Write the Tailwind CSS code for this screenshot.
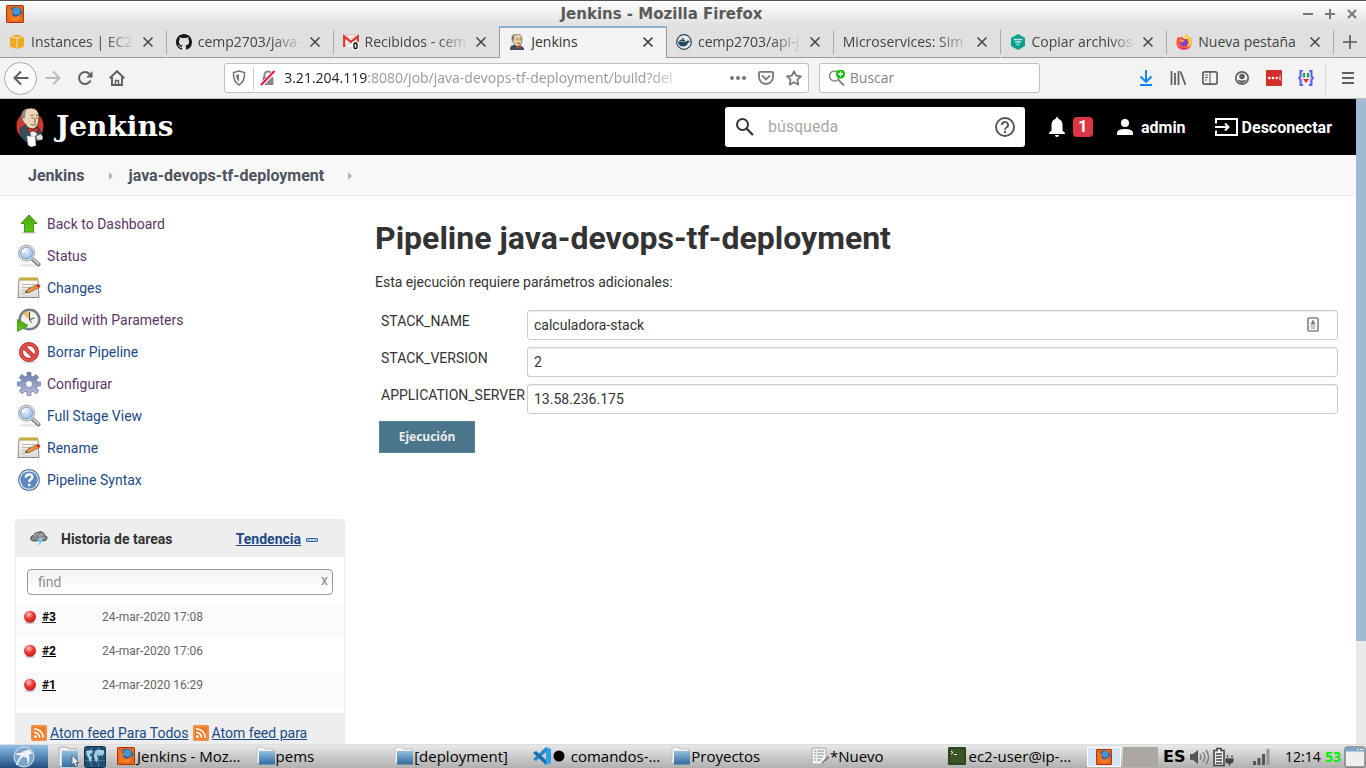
<!DOCTYPE html>
<html lang="es">
<head>
<meta charset="utf-8">
<title>Jenkins</title>
<script src="https://cdn.jsdelivr.net/npm/@tailwindcss/browser@4"></script>
</head>
<body class="flex h-screen flex-col overflow-hidden bg-white font-['Roboto','Liberation_Sans',sans-serif] text-sm text-[#333]">
<svg class="absolute size-0" aria-hidden="true">
  <defs>
    <linearGradient id="green" x1="0" y1="0" x2="0" y2="1"><stop offset="0" stop-color="#4aa80c"/><stop offset="1" stop-color="#5cc813"/></linearGradient>
    <linearGradient id="paper" x1="0" y1="0" x2="0" y2="1"><stop offset="0" stop-color="#fff"/><stop offset="1" stop-color="#d9d9d6"/></linearGradient>
    <linearGradient id="gear" x1="0" y1="0" x2="0" y2="1"><stop offset="0" stop-color="#6d7eaa"/><stop offset="1" stop-color="#b7bedb"/></linearGradient>
    <linearGradient id="folder" x1="0" y1="0" x2="0" y2="1"><stop offset="0" stop-color="#93bede"/><stop offset="1" stop-color="#2e6ca0"/></linearGradient>
    <radialGradient id="ball" cx=".4" cy=".3" r=".7"><stop offset="0" stop-color="#ffc9c4"/><stop offset=".5" stop-color="#ef3b36"/><stop offset="1" stop-color="#c91818"/></radialGradient>
    <radialGradient id="glass" cx=".4" cy=".3" r=".8"><stop offset="0" stop-color="#eef5fd"/><stop offset="1" stop-color="#8fb8e6"/></radialGradient>
  </defs>
  <symbol id="x" viewBox="0 0 12 12"><path d="M1.500 1.500l9 9M10.500 1.500l-9 9" stroke="currentColor" stroke-width="1.500" fill="none"/></symbol>
  <symbol id="firefox-old" viewBox="0 0 18 18">
    <rect width="18" height="18" rx="1.500" fill="#b13208"/><rect x="1" y="1" width="16" height="16" fill="#e9691c"/>
    <circle cx="9.500" cy="8.500" r="6.800" fill="#2b5d9e"/><circle cx="10.500" cy="6" r="3.800" fill="#4796cf"/>
    <path d="M2 3l1.500 1.700Q5 3.800 6.500 4.200L5.300 6 7.500 7.300 6 8.500Q6.500 12 10 11.500q3.500-.5 5.500-4Q16.500 14 11 15.500 4 16.500 2 11z" fill="#ee7420"/>
    <path d="M4.500 13q5 3 10-.8-4.500 5-10 .8z" fill="#f7b42c"/>
  </symbol>
  <symbol id="glass-icon" viewBox="0 0 24 24">
    <ellipse cx="11" cy="21.500" rx="9" ry="1.500" fill="#000" opacity=".1"/>
    <path d="M15 14.500l6.500 6" stroke="#777" stroke-width="4" stroke-linecap="round"/><path d="M15.500 14.500l6 5.500" stroke="#ccc" stroke-width="2" stroke-linecap="round"/>
    <circle cx="9.500" cy="9" r="8" fill="#e9e9e7" stroke="#a2a29e"/><circle cx="9.500" cy="9" r="6" fill="url(#glass)" stroke="#6d98cb"/>
    <path d="M5.500 9q0-3.500 4-4" stroke="#fff" stroke-width="1.500" fill="none"/>
  </symbol>
  <symbol id="notepad" viewBox="0 0 24 24">
    <path d="M2 3h19l1 18.500H1z" fill="url(#paper)" stroke="#8a8a86"/><path d="M2.500 1.500h18v3h-18z" fill="#b49a2b"/>
    <path d="M4 1v4M7 1v4M10 1v4M13 1v4M16 1v4M19 1v4" stroke="#e9d58a" stroke-width=".9"/>
    <path d="M5 8.500h13M5 11.500h11M5 14.500h7M5 17.500h3" stroke="#b8b8b6"/>
    <path d="M8.500 16.500l2.500-3.500L20.500 8.500l1.800 3L12 16.500z" fill="#e59b3c" stroke="#8a5515" stroke-width=".8"/><path d="M19 9.200l2-1q2.500.300 2.500 2l-2.300 1.600z" fill="#cf2d22"/><path d="M8 17l1.500-2 1 1.300z" fill="#222"/>
  </symbol>
  <symbol id="feed" viewBox="0 0 16 16"><rect width="16" height="16" rx="2" fill="#ec7a27"/><rect x="1" y="1" width="14" height="14" rx="1.500" fill="none" stroke="#f6a45f"/><circle cx="4.500" cy="11.700" r="1.400" fill="#fff"/><path d="M3.200 7.400a5.400 5.400 0 0 1 5.400 5.400M3.200 3.800a9 9 0 0 1 9 9" stroke="#fff" stroke-width="1.700" fill="none"/></symbol>
  <symbol id="red-ball" viewBox="0 0 14 14"><ellipse cx="7" cy="12.700" rx="5" ry="1.200" fill="#000" opacity=".2"/><circle cx="7" cy="6.800" r="6" fill="url(#ball)"/></symbol>
  <symbol id="folder-icon" viewBox="0 0 20 20"><path d="M1 2.500Q1 1 2.500 1h5L9 3h8.500v14H1z" fill="#f3f3f1" stroke="#b8b8b4" stroke-width=".7"/><path d="M3 5h16v13.500H3z" fill="url(#folder)"/></symbol>
  <symbol id="butler" viewBox="0 0 28 40">
    <ellipse cx="14" cy="19" rx="13.500" ry="14.500" fill="#d33833"/>
    <path d="M4 21l6-3 12 2 4 7-1 6-3 1-12 1-5-5z" fill="#335061" stroke="#1d2f3a" stroke-width=".6"/>
    <path d="M6 11Q6 1.500 15 1q8 .5 8 9l-.5 5q-1 6-6 7-5 0-7-5-3-1-3.500-6z" fill="#efd5b6" stroke="#3a2d24" stroke-width=".8"/>
    <path d="M5.500 12Q4 3 12 1 9 4 9.500 8l-1 4q-2-2-1.500 2z" fill="#8c8c8c"/>
    <path d="M14.500 8.500l3-.5M19.500 8l2.500.5M15.500 11h2M20 11h1.500M18.500 11l1 4-2 .5M15 17.500q3 1.500 5.500-.5" fill="none" stroke="#59432f" stroke-width=".8"/>
    <path d="M14 24l4-1 3 4-3 4-3-2z" fill="#f0f0f0"/><path d="M12 20.500l5 2 5-2v5l-5-1.500-5 1.500z" fill="#d33833" stroke="#4a1210" stroke-width=".6"/>
    <path d="M11 29l8 .5 1 9-5 1.500-3-2z" fill="#fff" stroke="#999" stroke-width=".4"/><path d="M20 29l5-2 2 3-1 3-5 0z" fill="#e3e3e3" stroke="#555" stroke-width=".5"/>
  </symbol>
  <symbol id="chev" viewBox="0 0 6 8"><path d="M1 0l4 4-4 4z" fill="#b3b3b3"/></symbol>
</svg>

<header class="flex h-[26px] shrink-0 items-center border-t border-[#555] bg-linear-to-b from-white to-[#e0e0e0] pl-[6px] pr-[9px]">
  <svg class="size-[18px]"><use href="#firefox-old"/></svg>
  <h2 class="flex-1 pr-1 text-center font-['DejaVu_Sans',sans-serif] text-[15px] leading-5 font-bold text-[#5a5a5a]">Jenkins - Mozilla Firefox</h2>
  <div class="flex items-center gap-3 text-[#777]">
    <button aria-label="Minimizar"><svg class="size-[10px]" viewBox="0 0 10 10"><path d="M0 5h10" stroke="currentColor" stroke-width="2"/></svg></button>
    <button aria-label="Maximizar"><svg class="size-[10px]" viewBox="0 0 10 10"><path d="M0 5h10M5 0v10" stroke="currentColor" stroke-width="2"/></svg></button>
    <button aria-label="Cerrar"><svg class="size-[10px]" viewBox="0 0 10 10"><path d="M1 1l8 8M9 1l-8 8" stroke="currentColor" stroke-width="2"/></svg></button>
  </div>
</header>

<nav aria-label="Pestañas" class="flex h-8 shrink-0 bg-[#e0e0e0] font-['Open_Sans','Noto_Sans',sans-serif] text-sm text-[#444]">
  <div class="flex min-w-0 flex-1 items-center gap-[6px] border-b border-[#999] pl-[9px] pr-3">
    <svg class="size-4 shrink-0" viewBox="0 0 16 16"><path d="M1 3l6.500 1.500V15L1 12.500zM8.500 4.500L15 3v9.500L8.500 15zM2 2l6-1.500L14 2 8 3.500z" fill="#f0a91f"/></svg>
    <span class="flex-1 overflow-hidden whitespace-nowrap [mask-image:linear-gradient(to_right,black_70%,transparent)]">Instances | EC2</span>
    <button aria-label="Cerrar pestaña"><svg class="size-3"><use href="#x"/></svg></button>
  </div>
  <span class="my-1 w-px bg-[#aaa]"></span>
  <div class="flex min-w-0 flex-1 items-center gap-[6px] border-b border-[#999] pl-[9px] pr-3">
    <svg class="size-4 shrink-0" viewBox="0 0 16 16"><path fill="#191717" d="M8 0C3.580 0 0 3.580 0 8c0 3.540 2.290 6.530 5.470 7.590.4.070.55-.17.55-.38v-1.490c-2.010.37-2.530-.49-2.690-.94-.09-.23-.48-.94-.82-1.130-.28-.15-.68-.52-.01-.53.63-.01 1.080.58 1.230.82.72 1.210 1.870.87 2.330.66.070-.52.28-.87.51-1.070-1.780-.2-3.640-.89-3.640-3.950 0-.87.31-1.590.82-2.150-.08-.2-.36-1.020.08-2.120 0 0 .67-.21 2.200.82a7.500 7.500 0 0 1 4 0c1.530-1.040 2.200-.82 2.200-.82.44 1.100.16 1.920.08 2.120.51.560.82 1.270.82 2.150 0 3.070-1.870 3.750-3.650 3.950.29.250.54.730.54 1.480v2.200c0 .21.150.46.550.38A8 8 0 0 0 16 8c0-4.420-3.580-8-8-8z"/></svg>
    <span class="flex-1 overflow-hidden whitespace-nowrap [mask-image:linear-gradient(to_right,black_70%,transparent)]">cemp2703/java-</span>
    <button aria-label="Cerrar pestaña"><svg class="size-3"><use href="#x"/></svg></button>
  </div>
  <span class="my-1 w-px bg-[#aaa]"></span>
  <div class="flex min-w-0 flex-1 items-center gap-[6px] border-b border-[#999] pl-[9px] pr-3">
    <svg class="size-4 shrink-0" viewBox="0 0 16 16"><path d="M0 1h16v12H0z" fill="#fff"/><path d="M1.200 13V2.500L8 8l6.800-5.500V8" fill="none" stroke="#dd3b34" stroke-width="2.300"/><path d="M3 12l4-4M13 1H3l5 4z" stroke="#e8a29e" fill="none" stroke-width=".7"/><rect x="9" y="7.500" width="7" height="8.500" rx="2" fill="#fff"/><rect x="11" y="9" width="3" height="5.500" rx="1.300" fill="none" stroke="#000" stroke-width="1.300"/></svg>
    <span class="flex-1 overflow-hidden whitespace-nowrap [mask-image:linear-gradient(to_right,black_70%,transparent)]">Recibidos - cem</span>
    <button aria-label="Cerrar pestaña"><svg class="size-3"><use href="#x"/></svg></button>
  </div>
  <div class="flex min-w-0 flex-1 items-center gap-[6px] border-x border-t-2 border-x-[#999] border-t-[#8fb1d0] bg-[#f3f3f3] pl-[9px] pr-3 pb-[2px] text-[#333]">
    <svg class="size-4 shrink-0" viewBox="0 0 16 16"><path d="M1 14q1-3 4-3h6l4 3v2H1z" fill="#335061"/><path d="M3 5q0-5 5-5 5 .3 5 5l-.5 4q-1 3.500-4 3.500Q5.500 12 4.500 9 3 8 3 5z" fill="#e8c9a3" stroke="#5a4a3c" stroke-width=".6"/><path d="M3 6Q1.500 1 6 .5 4.800 2 5 4L4.500 7z" fill="#777"/><path d="M7.500 5h1.500M10.500 5h1.500M8 9q2 1 3 0" stroke="#4a3a2c" fill="none" stroke-width=".8"/><path d="M7 12l2.500 1.500L12 12v3l-2.500-1L7 15z" fill="#d33833"/></svg>
    <span class="flex-1 overflow-hidden whitespace-nowrap">Jenkins</span>
    <button aria-label="Cerrar pestaña"><svg class="size-3"><use href="#x"/></svg></button>
  </div>
  <div class="flex min-w-0 flex-1 items-center gap-[6px] border-b border-[#999] pl-[9px] pr-3">
    <svg class="size-4 shrink-0" viewBox="0 0 16 16"><circle cx="8" cy="8" r="7.300" fill="#e8eef1" stroke="#27485f" stroke-width="1.200"/><path d="M2 7.500h8q2 0 1.800-2 1 .7.900 1.600l1.500.1q-.6 1.300-2 1.400Q11 12.500 7 12.500 2.500 12.500 2 7.500z" fill="#27485f"/><path d="M3.500 5.700h5.500v1.300H3.500zM6 4h1.600v1.400H6z" fill="#27485f"/></svg>
    <span class="flex-1 overflow-hidden whitespace-nowrap [mask-image:linear-gradient(to_right,black_70%,transparent)]">cemp2703/api-j</span>
    <button aria-label="Cerrar pestaña"><svg class="size-3"><use href="#x"/></svg></button>
  </div>
  <span class="my-1 w-px bg-[#aaa]"></span>
  <div class="flex min-w-0 flex-1 items-center gap-[6px] border-b border-[#999] pl-[9px] pr-3">
    <span class="flex-1 overflow-hidden whitespace-nowrap [mask-image:linear-gradient(to_right,black_75%,transparent)]">Microservices: Sim</span>
    <button aria-label="Cerrar pestaña"><svg class="size-3"><use href="#x"/></svg></button>
  </div>
  <span class="my-1 w-px bg-[#aaa]"></span>
  <div class="flex min-w-0 flex-1 items-center gap-[6px] border-b border-[#999] pl-[9px] pr-3">
    <svg class="size-4 shrink-0" viewBox="0 0 16 16"><path d="M8 0l7 4v8l-7 4-7-4V4z" fill="#0aa18f"/><path d="M3.500 5.500h9M5 8h6M6.500 10.500h3" stroke="#b6e5df" stroke-width="1.300"/></svg>
    <span class="flex-1 overflow-hidden whitespace-nowrap [mask-image:linear-gradient(to_right,black_75%,transparent)]">Copiar archivos</span>
    <button aria-label="Cerrar pestaña"><svg class="size-3"><use href="#x"/></svg></button>
  </div>
  <span class="my-1 w-px bg-[#aaa]"></span>
  <div class="flex min-w-0 flex-1 items-center gap-[6px] border-b border-[#999] pl-[9px] pr-3">
    <svg class="size-4 shrink-0" viewBox="0 0 16 16"><path d="M1 5l1-2.500 1.500 1.200Q5 2.500 6.500 2.700L8 5h3L9.500 0q2 1 3 3l1.500 0q2 3 1.700 6Q15 15.500 8 16 .5 15.500.3 9q0-2.500.7-4z" fill="#ff5a36"/><path d="M9 0q3 1 3.500 3l1 0q2.500 3 2 6.500Q14 13 11 12q3-3 1-7H8.500z" fill="#ffd53d"/><circle cx="8" cy="8.700" r="3.600" fill="#7b3fe0"/><path d="M3 6q3-1.500 5.500.7L6 8.500z" fill="#ffa33a"/><path d="M1 11q4 4.500 12 2.500-7 4.500-12-2.500z" fill="#e5228c"/></svg>
    <span class="flex-1 overflow-hidden whitespace-nowrap">Nueva pestaña</span>
    <button aria-label="Cerrar pestaña"><svg class="size-3"><use href="#x"/></svg></button>
  </div>
  <span class="my-1 w-px bg-[#aaa]"></span>
  <button aria-label="Nueva pestaña" class="flex w-8 items-center justify-center border-b border-[#999]"><svg class="size-[14px]" viewBox="0 0 14 14"><path d="M0 7h14M7 0v14" stroke="#555" stroke-width="1.600"/></svg></button>
</nav>

<div class="flex h-[41px] shrink-0 items-center border-b border-[#bfbfbf] bg-[#f3f3f3] pl-1 font-['Open_Sans','Noto_Sans',sans-serif] text-sm text-[#606060]">
  <button aria-label="Atrás" class="flex size-[33px] items-center justify-center rounded-full border border-[#aaa] bg-[#fbfbfb]"><svg class="size-4" viewBox="0 0 16 16" fill="none" stroke="currentColor" stroke-width="2"><path d="M15.500 8H1.500M8 1.500L1.500 8 8 14.500"/></svg></button>
  <button aria-label="Adelante" class="flex size-8 items-center justify-center text-[#bbb]"><svg class="size-4" viewBox="0 0 16 16" fill="none" stroke="currentColor" stroke-width="2"><path d="M.5 8h14M8 1.500L14.500 8 8 14.500"/></svg></button>
  <button aria-label="Recargar" class="flex size-8 items-center justify-center"><svg class="size-4" viewBox="0 0 16 16" fill="none" stroke="currentColor" stroke-width="2"><path d="M13.500 10.500A6 6 0 1 1 12.500 4"/><path d="M15.500 1v6.500H9z" fill="currentColor" stroke="none"/></svg></button>
  <button aria-label="Inicio" class="flex size-8 items-center justify-center"><svg class="size-4" viewBox="0 0 16 16" fill="none" stroke="currentColor" stroke-width="1.900"><path d="M.7 8.200L8 1.200l7.300 7M3 7v8h10V7"/><path d="M6.500 15v-4.500h3V15" stroke-width="1.400"/></svg></button>
  <span class="flex-[93]"></span>
  <div class="flex h-[30px] min-w-0 flex-[582] items-center rounded-[3px] border border-[#c0c0c0] bg-white px-[6px]">
    <svg class="mr-[6px] size-4 shrink-0" viewBox="0 0 16 16" fill="none" stroke="#777" stroke-width="1.500"><path d="M8 1l5.500 1.500q.5 9-5.500 12.500Q2 11.500 2.500 2.500z"/><path d="M8 4v8q-3-3-3-6.800z" fill="#777" stroke="none"/></svg>
    <span class="mr-[6px] h-[22px] w-px bg-[#ccc]"></span>
    <svg class="mr-2 size-4 shrink-0" viewBox="0 0 16 16"><path d="M4.500 7V5a3.500 3.500 0 0 1 7 0v2" fill="none" stroke="#888" stroke-width="2"/><rect x="2.500" y="7" width="11" height="8" rx="1" fill="#888"/><path d="M1 15.500L15 1" stroke="#fff" stroke-width="4"/><path d="M1 15L14.500 1" stroke="#ff1040" stroke-width="2"/></svg>
    <p aria-label="Dirección" class="min-w-0 flex-1 overflow-hidden whitespace-nowrap text-[#999] [mask-image:linear-gradient(to_right,black_88%,transparent)]"><span class="text-[#222]">3.21.204.119</span>:8080/job/java-devops-tf-deployment/build?del</p>
    <div class="ml-9 flex shrink-0 gap-3 text-[#777]">
      <button aria-label="Acciones"><svg class="size-4" viewBox="0 0 16 16" fill="currentColor"><circle cx="2" cy="8" r="2"/><circle cx="8" cy="8" r="2"/><circle cx="14" cy="8" r="2"/></svg></button>
      <button aria-label="Pocket"><svg class="size-4" viewBox="0 0 16 16" fill="none" stroke="currentColor" stroke-width="1.800"><path d="M2 1.900h12q1 0 1 1V7A7 7 0 0 1 1 7V2.900q0-1 1-1z"/><path d="M4.500 6L8 9.300 11.500 6" stroke-linecap="round"/></svg></button>
      <button aria-label="Marcar"><svg class="size-4" viewBox="0 0 16 16" fill="none" stroke="currentColor" stroke-width="1.700" stroke-linejoin="round"><path d="M8 1.200l2.100 4.500 4.900.6-3.600 3.400.9 5L8 12.300l-4.300 2.400.9-5L1 6.300l4.900-.6z"/></svg></button>
    </div>
  </div>
  <label class="ml-[10px] flex h-[30px] w-[221px] items-center gap-[6px] rounded-[3px] border border-[#c0c0c0] bg-white px-2">
    <svg class="h-4 w-[18px] shrink-0" viewBox="0 0 18 16"><circle cx="6.500" cy="6" r="5" fill="none" stroke="#888" stroke-width="1.600"/><path d="M10 9.500l6 6" stroke="#888" stroke-width="2"/><circle cx="12.500" cy="4" r="4.500" fill="#12bc00"/><path d="M12.500 1.500v5M10 4h5" stroke="#fff" stroke-width="1.400"/></svg>
    <input type="text" placeholder="Buscar" aria-label="Buscar" class="-ml-1 min-w-0 flex-1 pl-[2px] outline-none placeholder:text-[#858585]">
  </label>
  <span class="flex-[92]"></span>
  <div class="flex items-center">
    <button aria-label="Descargas" class="flex w-8 justify-center"><svg class="size-4" viewBox="0 0 16 16" fill="none" stroke="#0a84ff" stroke-width="1.900"><path d="M8 0v11.500M2.500 6.500L8 12l5.500-5.500M2 15h12"/></svg></button>
    <button aria-label="Biblioteca" class="flex w-8 justify-center"><svg class="size-4" viewBox="0 0 16 16" fill="none" stroke="currentColor" stroke-width="1.800"><path d="M1.500 1v14M5 3v12M8.500 1v14M10.500 1.500L15.500 15"/></svg></button>
    <button aria-label="Barra lateral" class="flex w-8 justify-center"><svg class="size-4" viewBox="0 0 16 16" fill="none" stroke="currentColor" stroke-width="1.700"><rect x=".9" y="1.900" width="14.200" height="12.200" rx="1.800"/><path d="M8 2v12M3 5h3M3 7.500h3M3 10h2" stroke-width="1.100"/></svg></button>
    <button aria-label="Cuenta" class="flex w-8 justify-center"><svg class="size-4" viewBox="0 0 16 16"><circle cx="8" cy="8" r="6.200" fill="none" stroke="currentColor" stroke-width="1.700"/><circle cx="8" cy="6.500" r="2.800" fill="currentColor"/><path d="M3.500 9.500q4.500 2 9 0-1.500 3.500-4.500 3.500T3.500 9.500z" fill="currentColor"/></svg></button>
    <button aria-label="LastPass" class="flex w-8 justify-center"><svg class="size-4" viewBox="0 0 16 16"><rect width="16" height="16" rx="1" fill="#d32d27"/><circle cx="3.200" cy="8" r="1.300" fill="#fff"/><circle cx="7" cy="8" r="1.300" fill="#fff"/><circle cx="10.800" cy="8" r="1.300" fill="#fff"/><path d="M14 5.500v5" stroke="#fff"/></svg></button>
    <button aria-label="Extensión JSON" class="flex w-8 justify-center"><svg class="size-4" viewBox="0 0 16 16"><path d="M5 1H2.500v5L1 8l1.500 2v5H5M11 1h2.500v5L15 8l-1.500 2v5H11" fill="#c9cdfa" stroke="#5a62ea" stroke-width="2"/><path d="M4.500 1h7v13h-7z" fill="#f0f2ff"/><path d="M6 3v4.500M10 3v4.500" stroke="#2aa043" stroke-width="2.200"/><path d="M5 9h6l-3 4z" fill="#e22"/></svg></button>
    <span class="mx-[3px] h-8 w-px bg-[#d5d5d5]"></span>
    <button aria-label="Menú" class="flex w-[37px] justify-center"><svg class="size-3" viewBox="0 0 12 12" stroke="currentColor" stroke-width="1.900"><path d="M0 1h12M0 6h12M0 11h12"/></svg></button>
  </div>
</div>

<div class="flex min-h-0 flex-1">
  <div class="flex min-w-0 flex-1 flex-col overflow-hidden">
    <div class="flex h-14 shrink-0 items-center bg-black pl-4 pr-6 text-base font-bold text-white">
      <a href="#" class="flex items-center gap-3">
        <svg class="h-10 w-7"><use href="#butler"/></svg>
        <span class="font-['DejaVu_Serif',serif] text-[28px] leading-8">Jenkins</span>
      </a>
      <label class="ml-auto flex h-10 w-75 items-center rounded-[3px] bg-white px-[10px]">
        <svg class="size-5 shrink-0" viewBox="0 0 20 20" fill="none" stroke="#333"><circle cx="7.500" cy="7.500" r="5.500" stroke-width="2"/><path d="M11.500 11.500l6.500 6.500" stroke-width="2.200"/></svg>
        <input type="text" placeholder="búsqueda" aria-label="búsqueda" class="ml-[13px] min-w-0 flex-1 font-normal outline-none placeholder:text-[#a9a9a9]">
        <svg class="size-5 shrink-0" viewBox="0 0 20 20" fill="none" stroke="#4d545d" stroke-width="1.900"><circle cx="10" cy="10" r="9"/><path d="M7 8a3 3 0 1 1 4.500 2.500Q10 11.300 10 12.700"/><path d="M10 14v2"/></svg>
      </label>
      <a href="#" class="ml-6 flex items-center gap-[8px]">
        <svg class="h-5 w-4" viewBox="0 0 16 20" fill="#fff"><path d="M8 0q1.300 0 1.300 1.700Q13.500 3 13.500 8v5.500L16 16v1H0v-1l2.500-2.500V8q0-5 4.200-6.300Q6.700 0 8 0zM6 18h4q0 2-2 2t-2-2z"/></svg>
        <span class="flex h-5 w-5 items-center justify-center rounded bg-[#dc3545]">1</span>
      </a>
      <a href="#" class="ml-6 flex items-center gap-2">
        <svg class="size-4" viewBox="0 0 16 16" fill="#fff"><circle cx="8" cy="4" r="4"/><path d="M0 16v-2q0-4 8-4t8 4v2z"/></svg><span class="pt-[2px]">admin</span></a>
      <a href="#" class="ml-[29px] flex items-center gap-1">
        <svg class="h-[18px] w-[23px]" viewBox="0 0 23 18" fill="none" stroke="#fff" stroke-width="2"><path d="M1 5.500V1h21v16H1v-4.500M0 9h13M10 5.500L13.500 9 10 12.500"/></svg><span class="pt-[2px]">Desconectar</span></a>
    </div>
    <nav aria-label="Ruta" class="flex h-[41px] shrink-0 items-center border-b border-[#ececec] bg-[#f8f8f8] pl-7 pt-[2px] text-base font-bold text-[#4d545d]">
      <a href="#">Jenkins</a>
      <svg class="ml-[23px] mr-[15px] h-2 w-[6px]"><use href="#chev"/></svg>
      <a href="#">java-devops-tf-deployment</a>
      <svg class="ml-[23px] h-2 w-[6px]"><use href="#chev"/></svg>
    </nav>
    <div class="flex min-h-0 flex-1">
      <aside class="w-[345px] shrink-0 pl-[15px] pt-3">
        <nav aria-label="Tareas" class="text-[#204a87]">
          <a href="#" class="flex h-8 items-center gap-[6px] pl-[2px] text-[#5c3566]"><svg class="size-6" viewBox="0 0 24 24"><ellipse cx="12" cy="20.500" rx="8" ry="1.300" fill="#000" opacity=".15"/><path d="M12 3l8 8.500h-3.500V20h-9v-8.500H4z" fill="url(#green)" stroke="#3b8a0a" stroke-width=".9"/></svg><span>Back to Dashboard</span></a>
          <a href="#" class="flex h-8 items-center gap-[6px] pl-[2px] text-[#5c3566]"><svg class="size-6"><use href="#glass-icon"/></svg><span>Status</span></a>
          <a href="#" class="flex h-8 items-center gap-[6px] pl-[2px]"><svg class="size-6"><use href="#notepad"/></svg><span>Changes</span></a>
          <a href="#" class="flex h-8 items-center gap-[6px] pl-[2px] text-[#5c3566]"><svg class="size-6" viewBox="0 0 24 24"><circle cx="12.500" cy="11.500" r="9.800" fill="#f0f0ec" stroke="#777b90" stroke-width="2.400"/><path d="M12.500 11.500L6 6q2.500-3 5.500-3z" fill="#e2c558"/><path d="M12.500 4v7.500l5-1.500M12.500 11.500l2 3" stroke="#444" fill="none"/><path d="M.5 11.500l10.500 6-10.500 6z" fill="url(#green)" stroke="#3b8a0a" stroke-width=".8"/></svg><span>Build with Parameters</span></a>
          <a href="#" class="flex h-8 items-center gap-[6px] pl-[2px]"><svg class="size-6" viewBox="0 0 24 24"><ellipse cx="12" cy="22" rx="8" ry="1.200" fill="#000" opacity=".15"/><circle cx="12" cy="12" r="8" fill="#fff" stroke="#c2211f" stroke-width="4"/><path d="M6.500 6.500l11 11" stroke="#c2211f" stroke-width="4"/><circle cx="12" cy="12" r="8" fill="none" stroke="#e45654" stroke-width="2.200"/><path d="M6.500 6.500l11 11" stroke="#e45654" stroke-width="2.200"/></svg><span>Borrar Pipeline</span></a>
          <a href="#" class="flex h-8 items-center gap-[6px] pl-[2px] text-[#5c3566]"><svg class="size-6" viewBox="0 0 24 24"><path fill-rule="evenodd" d="M10 .5h4v3.700l2 .8 3-2.500 2.700 2.800L19.300 8l.8 2h3.600v4H20l-.8 2 2.500 3-2.800 2.700-2.900-2.500-2 .8v3.500h-4V20l-2-.8-3 2.500L2.300 19l2.500-3-.8-2H.3v-4H4l.8-2-2.500-2.800L5 2.500 8 5l2-.8zM12 8.500a3.500 3.500 0 1 0 0 7 3.500 3.500 0 0 0 0-7z" fill="url(#gear)" stroke="#6873a0" stroke-width=".7"/></svg><span>Configurar</span></a>
          <a href="#" class="flex h-8 items-center gap-[6px] pl-[2px]"><svg class="size-6"><use href="#glass-icon"/></svg><span>Full Stage View</span></a>
          <a href="#" class="flex h-8 items-center gap-[6px] pl-[2px]"><svg class="size-6"><use href="#notepad"/></svg><span>Rename</span></a>
          <a href="#" class="flex h-8 items-center gap-[6px] pl-[2px]"><svg class="size-6" viewBox="0 0 24 24"><circle cx="12" cy="12" r="10.300" fill="#fff" stroke="#5e7fae" stroke-width="1.200"/><circle cx="12" cy="12" r="8.700" fill="#5d88c0"/><path d="M8.800 9.700q0-3.200 3.300-3.200t3.200 2.700q0 1.600-1.800 2.500-1.300.6-1.300 2.300M12.200 15.700v2.500" stroke="#fff" stroke-width="2.400" fill="none"/></svg><span>Pipeline Syntax</span></a>
        </nav>
        <section class="mt-[23px] rounded-t border border-[#ececec]">
          <div class="flex h-[37px] items-center bg-[#eee] pl-[14px] pr-[26px] font-bold">
            <svg class="mr-[13px] size-[18px]" viewBox="0 0 18 18"><path d="M3.500 11Q0 10.500.8 7.500 1.500 5.500 3.500 5.500 4.500 2 8 2.500q2-2 5 0 1.500 1 1.500 3 3 .5 2.500 3-.5 2.500-4 2.500z" fill="#85898d" stroke="#3f4346" stroke-width=".9"/><path d="M4 6q1-3 4-2.500M9 6q2-3 4.500-.5" stroke="#c0c4c7" fill="none"/><path d="M10 8l-3 4h2.500L6.500 17.500 13 11h-2.500l2-3z" fill="#5dc5f5" stroke="#fff" stroke-width=".4"/></svg>
            <h2>Historia de tareas</h2>
            <a href="#" class="ml-auto text-[#204a87] underline">Tendencia</a>
            <button aria-label="Contraer" class="ml-[5px] mt-[2px] h-1 w-3 rounded-[1px] border border-[#3465a4] bg-[#b6cbe8]"></button>
          </div>
          <div class="px-[11px] pt-3">
            <label class="flex h-[26px] items-center rounded border border-[#999] bg-linear-to-b from-[#f3f3f3] to-white px-[4px]">
              <input type="text" placeholder="find" aria-label="find" class="min-w-0 flex-1 pl-[6px] outline-none placeholder:text-[#8f8f8f]">
              <button aria-label="Borrar búsqueda" class="pb-1 text-sm leading-4 text-[#888]">x</button>
            </label>
          </div>
          <table class="mt-[9px] w-full text-xs text-[#666]">
            <tbody>
              <tr class="h-[34px] bg-[#fbfbfb] align-top"><td class="w-[86px] pl-[7px] pt-[5px]"><a href="#" class="flex items-center gap-[5px] font-bold text-black underline"><svg class="size-[14px]"><use href="#red-ball"/></svg>#3</a></td><td class="pt-[5px]">24-mar-2020 17:08</td></tr>
              <tr class="h-[34px] align-top"><td class="pl-[7px] pt-[5px]"><a href="#" class="flex items-center gap-[5px] font-bold text-black underline"><svg class="size-[14px]"><use href="#red-ball"/></svg>#2</a></td><td class="pt-[5px]">24-mar-2020 17:06</td></tr>
              <tr class="h-[34px] bg-[#fbfbfb] align-top"><td class="pl-[7px] pt-[5px]"><a href="#" class="flex items-center gap-[5px] font-bold text-black underline"><svg class="size-[14px]"><use href="#red-ball"/></svg>#1</a></td><td class="pt-[5px]">24-mar-2020 16:29</td></tr>
            </tbody>
          </table>
          <div class="mt-[7px] flex items-center gap-[3px] bg-[#eee] pb-4 pl-[15px] pt-[10px] text-[#204a87]">
            <svg class="size-4"><use href="#feed"/></svg><a href="#" class="underline">Atom feed Para Todos</a>
            <svg class="ml-[1px] size-4"><use href="#feed"/></svg><a href="#" class="underline">Atom feed para</a>
          </div>
        </section>
      </aside>
      <main class="min-w-0 flex-1 pl-[30px] pr-[18px] pt-[22px]">
        <h1 class="text-[32px] font-bold leading-10">Pipeline java-devops-tf-deployment</h1>
        <p class="mt-[14px] leading-5">Esta ejecución requiere parámetros adicionales:</p>
        <form class="mt-[18px]" onsubmit="return false">
          <div class="grid grid-cols-[146px_1fr] gap-y-[7px] pl-[6px]">
            <label for="name" class="leading-[22px]">STACK_NAME</label>
            <div class="flex h-[30px] items-center rounded-[3px] border border-[#ccc] pr-[18px] shadow-[inset_0_1px_1px_rgba(0,0,0,0.075)]">
              <input id="name" type="text" value="calculadora-stack" class="min-w-0 flex-1 px-[6px] outline-none">
              <svg class="h-4 w-3" viewBox="0 0 12 16"><rect x="1" y="1" width="10" height="13" rx="1" fill="#fff" stroke="#888" stroke-width="1.700"/><path d="M6 3q1 0 1 1.500L8.500 7.500h-5L5 4.500Q5 3 6 3z" fill="#777"/><path d="M3.500 9.200h5M3.500 11.200h5" stroke="#aaa" stroke-width="1.300"/></svg>
            </div>
            <label for="version" class="leading-[22px]">STACK_VERSION</label>
            <input id="version" type="text" value="2" class="h-[30px] min-w-0 rounded-[3px] border border-[#ccc] px-[6px] shadow-[inset_0_1px_1px_rgba(0,0,0,0.075)] outline-none">
            <label for="server" class="leading-[22px]">APPLICATION_SERVER</label>
            <input id="server" type="text" value="13.58.236.175" class="h-[30px] min-w-0 rounded-[3px] border border-[#ccc] px-[6px] shadow-[inset_0_1px_1px_rgba(0,0,0,0.075)] outline-none">
          </div>
          <button class="ml-1 mt-[7px] h-8 w-24 border border-[#5a8599] bg-[#4b758b] font-['Open_Sans','Noto_Sans',sans-serif] text-xs font-bold text-[#eee]">Ejecución</button>
        </form>
      </main>
    </div>
  </div>
  <div aria-hidden="true" class="w-[10px] shrink-0 bg-[#e9e9e9]"><div class="h-[84%] bg-[#a0bad4]"></div></div>
</div>

<footer class="flex h-6 shrink-0 items-center border-t border-[#ddd] bg-linear-to-b from-[#e8e8e8] to-[#b0b0b0] font-['Open_Sans','Noto_Sans',sans-serif] text-[15px] text-black">
  <button aria-label="Inicio" class="flex h-full w-12 items-center justify-center bg-linear-to-b from-[#92c0e8] to-[#1d4f80]"><svg class="size-[22px]" viewBox="0 0 22 22"><circle cx="11" cy="11" r="10" fill="#7ea6ca" stroke="#d7e5f1"/><path d="M2 7q5 1 9-2l5-1.500 4 4-4 1q1 6-1 10l-1-6q-3-3-5-1-3 3-5 8l-1-1Q6 12 8 9 4 10 2 7z" fill="#eef4f9"/></svg></button>
  <button aria-label="Archivos" class="ml-[10px]"><svg class="size-[22px]" viewBox="0 0 22 22"><path d="M1 3q0-2 2-2h6l2 2h8v17H1z" fill="#f3f3f1" stroke="#aaa"/><path d="M3.500 4.500h17v17h-17z" fill="url(#folder)" stroke="#dce8f2" stroke-width=".7"/><path d="M14 9v10l2-2 1.500 4 2-1-1.500-3.500h3z" fill="#eee" stroke="#555" stroke-width=".8"/></svg></button>
  <button aria-label="Navegador" class="ml-1"><svg class="size-[22px]" viewBox="0 0 22 22"><rect x=".5" y=".5" width="21" height="21" rx="2" fill="#1f5072" stroke="#123650"/><path d="M2 5l5-1 2 1-1 2-2 1 0 1.500 2 2-1 3-1 2-1-2-.5-3-1.500-1.500zM11 5l3-1.500 6 1v3l-2 3-1.500-2-1.500 2-2-2 0 2 1 2-1.500 4-1.500-2-.5-3-1-1.500 1-2z" fill="#a9d3e8"/><path d="M1 7.500h20M1 14.500h20M7.500 1v20M14.500 1v20" stroke="#79b4d4" stroke-width=".4"/></svg></button>
  <div class="ml-[11px] flex min-w-0 flex-1 whitespace-nowrap">
    <button class="flex min-w-0 flex-1 items-center gap-[2px]"><svg class="size-[18px] shrink-0"><use href="#firefox-old"/></svg>Jenkins - Moz…</button>
    <button class="flex min-w-0 flex-1 items-center"><svg class="size-5 shrink-0"><use href="#folder-icon"/></svg>pems</button>
    <button class="flex min-w-0 flex-1 items-center"><svg class="size-5 shrink-0"><use href="#folder-icon"/></svg>[deployment]</button>
    <button class="flex min-w-0 flex-1 items-center gap-[2px]"><svg class="size-[18px] shrink-0" viewBox="0 0 18 18"><path d="M13 0l5 2v14l-5 2z" fill="#2ba2ea"/><path d="M13 0v5L3 14 0 12.200z" fill="#2489ca"/><path d="M13 18v-5L3 4 0 5.800z" fill="#1070b3"/></svg><svg class="mr-1 size-3 shrink-0" viewBox="0 0 12 12"><circle cx="6" cy="6" r="5.500"/></svg>comandos-…</button>
    <button class="flex min-w-0 flex-1 items-center"><svg class="size-5 shrink-0"><use href="#folder-icon"/></svg>Proyectos</button>
    <button class="flex min-w-0 flex-1 items-center"><svg class="size-5 shrink-0" viewBox="0 0 20 20"><path d="M2 2h14v14q-2 2-4 2H2z" fill="#f5f5f5" stroke="#aaa"/><path d="M4 5h2M7 5h7M4 8h2M7 8h7M4 11h2M7 11h6M4 14h2M7 14h4" stroke="#888"/><path d="M11 17l7-7 1.500 1.500-7 6z" fill="#777"/></svg>*Nuevo</button>
    <button class="flex min-w-0 flex-1 items-center gap-[2px]"><svg class="size-[18px] shrink-0" viewBox="0 0 18 18"><rect width="18" height="18" rx="1.500" fill="#3a5524"/><rect x="1" y="1" width="16" height="16" fill="none" stroke="#233716"/><path d="M3 4l2 1.500L3 7M6 7.500h3" stroke="#fff" fill="none"/></svg>ec2-user@ip-…</button>
  </div>
  <div class="flex h-full shrink-0 items-center">
    <button aria-label="Escritorio 1" class="flex h-5 w-[34px] items-center justify-center border border-white bg-[#d4e4f3]"><svg class="size-4"><use href="#firefox-old"/></svg></button>
    <button aria-label="Escritorio 2" class="ml-[2px] h-5 w-[35px] bg-[#aba8a4]"></button>
    <span class="ml-[5px] w-[27px] font-['DejaVu_Sans',sans-serif] text-base font-bold">ES</span>
    <svg class="h-4 w-5" viewBox="0 0 20 16"><path d="M0 5h3l5-4v14l-5-4H0z" fill="#555"/><path d="M10 5q2 3 0 6M13 3q3.500 5 0 10M16 1q5 7 0 14" fill="none" stroke="#777" stroke-width="1.300"/></svg>
    <svg class="ml-[3px] h-5 w-[22px]" viewBox="0 0 22 20"><path d="M4 1.500h4v2h3v15H1v-15h3z" fill="#eee" stroke="#444" stroke-width="1.600"/><path d="M3 7h6M3 10h6M3 13h6M3 16h6" stroke="#444" stroke-width="1.600"/><path d="M12 11h9v3q-1 3-3.500 3v2h-2v-2Q12 17 12 14zM13.500 8h2v3h-2zM18 8h2v3h-2z" fill="#444" stroke="#ddd" stroke-width=".5"/></svg>
    <svg class="ml-[18px] h-[18px] w-[17px]" viewBox="0 0 17 18" fill="#555"><path d="M0 13h3v4H0zM4.500 10h3v7h-3zM9 6h3v11H9z"/><path d="M13.500 1h3v16h-3z" fill="#999"/></svg>
    <time class="ml-[15px] w-10 text-sm">12:14</time>
    <span class="w-[19px] text-sm font-bold text-[#00f000]">53</span>
    <button aria-label="Mostrar escritorio"><svg class="size-[22px]" viewBox="0 0 22 22"><rect x="1" y="1" width="20" height="20" rx="1.500" fill="#eee" stroke="#555"/><path d="M1.500 1.500h19v4h-19z" fill="#7aa6cf"/><path d="M13 3.500h2M16 3.500h2M19 3.500h1" stroke="#fff"/></svg></button>
  </div>
</footer>
</body>
</html>
